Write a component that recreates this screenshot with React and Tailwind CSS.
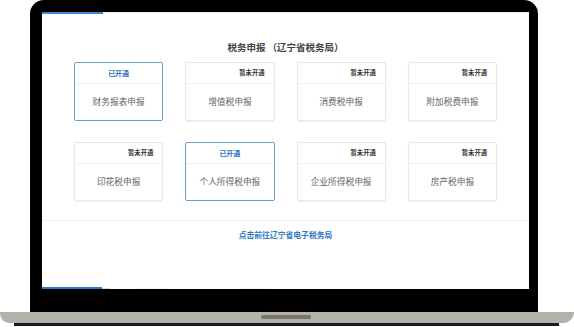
import React from 'react';

const items = [
  { name: '财务报表申报', open: true },
  { name: '增值税申报', open: false },
  { name: '消费税申报', open: false },
  { name: '附加税费申报', open: false },
  { name: '印花税申报', open: false },
  { name: '个人所得税申报', open: true },
  { name: '企业所得税申报', open: false },
  { name: '房产税申报', open: false },
];

const TaxCard = ({ name, open }) => (
  <div
    className={
      open
        ? 'h-[59px] rounded-[2px] border border-[#6a9fd4] bg-white flex flex-col'
        : 'h-[59px] rounded-[2px] border border-[#e6e8eb] bg-white shadow-[0_1px_2px_rgba(0,0,0,0.06)] flex flex-col'
    }
  >
    <div
      className={
        open
          ? 'h-[21px] border-b border-[#eef0f3] flex items-center justify-center text-[7px] font-bold text-[#2a72bf]'
          : 'h-[21px] border-b border-[#eef0f3] flex items-center justify-end pr-[9px] text-[6.3px] font-bold text-[#333]'
      }
    >
      {open ? '已开通' : '暂未开通'}
    </div>
    <div className="flex-1 flex items-center justify-center text-[8.7px] text-[#666]">{name}</div>
  </div>
);

const App = () => {
  return (
    <div
      className="w-[574px] h-[327px] bg-white overflow-hidden flex flex-col"
      style={{ fontFamily: '"Noto Sans CJK SC", "Noto Sans", sans-serif' }}
    >
      {/* Laptop lid */}
      <div className="ml-[30px] w-[508px] h-[312px] bg-black rounded-t-[14px] pt-[12px] pl-[12px] pr-[9px] pb-[23px]">
        <div className="h-full bg-white flex flex-col">
          {/* top tab line */}
          <div className="flex h-[2px]">
            <div className="w-[61px] bg-[#3f88c9]" />
            <div className="flex-1 border-t border-[#e3e7ee]" />
          </div>

          <div className="pt-[26px] text-center text-[9.5px] font-bold text-[#444] leading-[14px]">
            税务申报 （辽宁省税务局）
          </div>

          <div className="mt-[8px] px-[32px] grid grid-cols-4 gap-x-[22px] gap-y-[21px]">
            {items.map((it) => (
              <TaxCard key={it.name} {...it} />
            ))}
          </div>

          <div className="mt-[19px] border-t border-[#f0f1f3]" />
          <div className="pt-[8px] text-center text-[7.8px] font-bold text-[#2f76c0]">
            点击前往辽宁省电子税务局
          </div>

          <div className="flex-1" />
          <div className="flex items-end h-[4px]">
            <div className="w-[60px] h-[2px] bg-[#2b7bc0]" />
            <div className="w-[8px] h-[1px] bg-[#d5d8dc]" />
            <div className="ml-[24px] w-[32px] h-[1px] bg-[#f3f4f5]" />
            <div className="ml-[75px] w-[28px] h-[1px] bg-[#f3f4f5]" />
          </div>
        </div>
      </div>

      {/* Laptop base */}
      <div className="relative h-[11px] w-[574px] bg-[#b3b1ac] rounded-bl-[10px] rounded-br-[12px] flex justify-center">
        <div className="mt-[3px] ml-[-2px] w-[50px] h-[4px] rounded-full bg-[#7b7563]" />
      </div>
      <div className="ml-[14px] w-[545px] h-[3px] bg-[#1a1a1a]" />
    </div>
  );
};

export default App;
